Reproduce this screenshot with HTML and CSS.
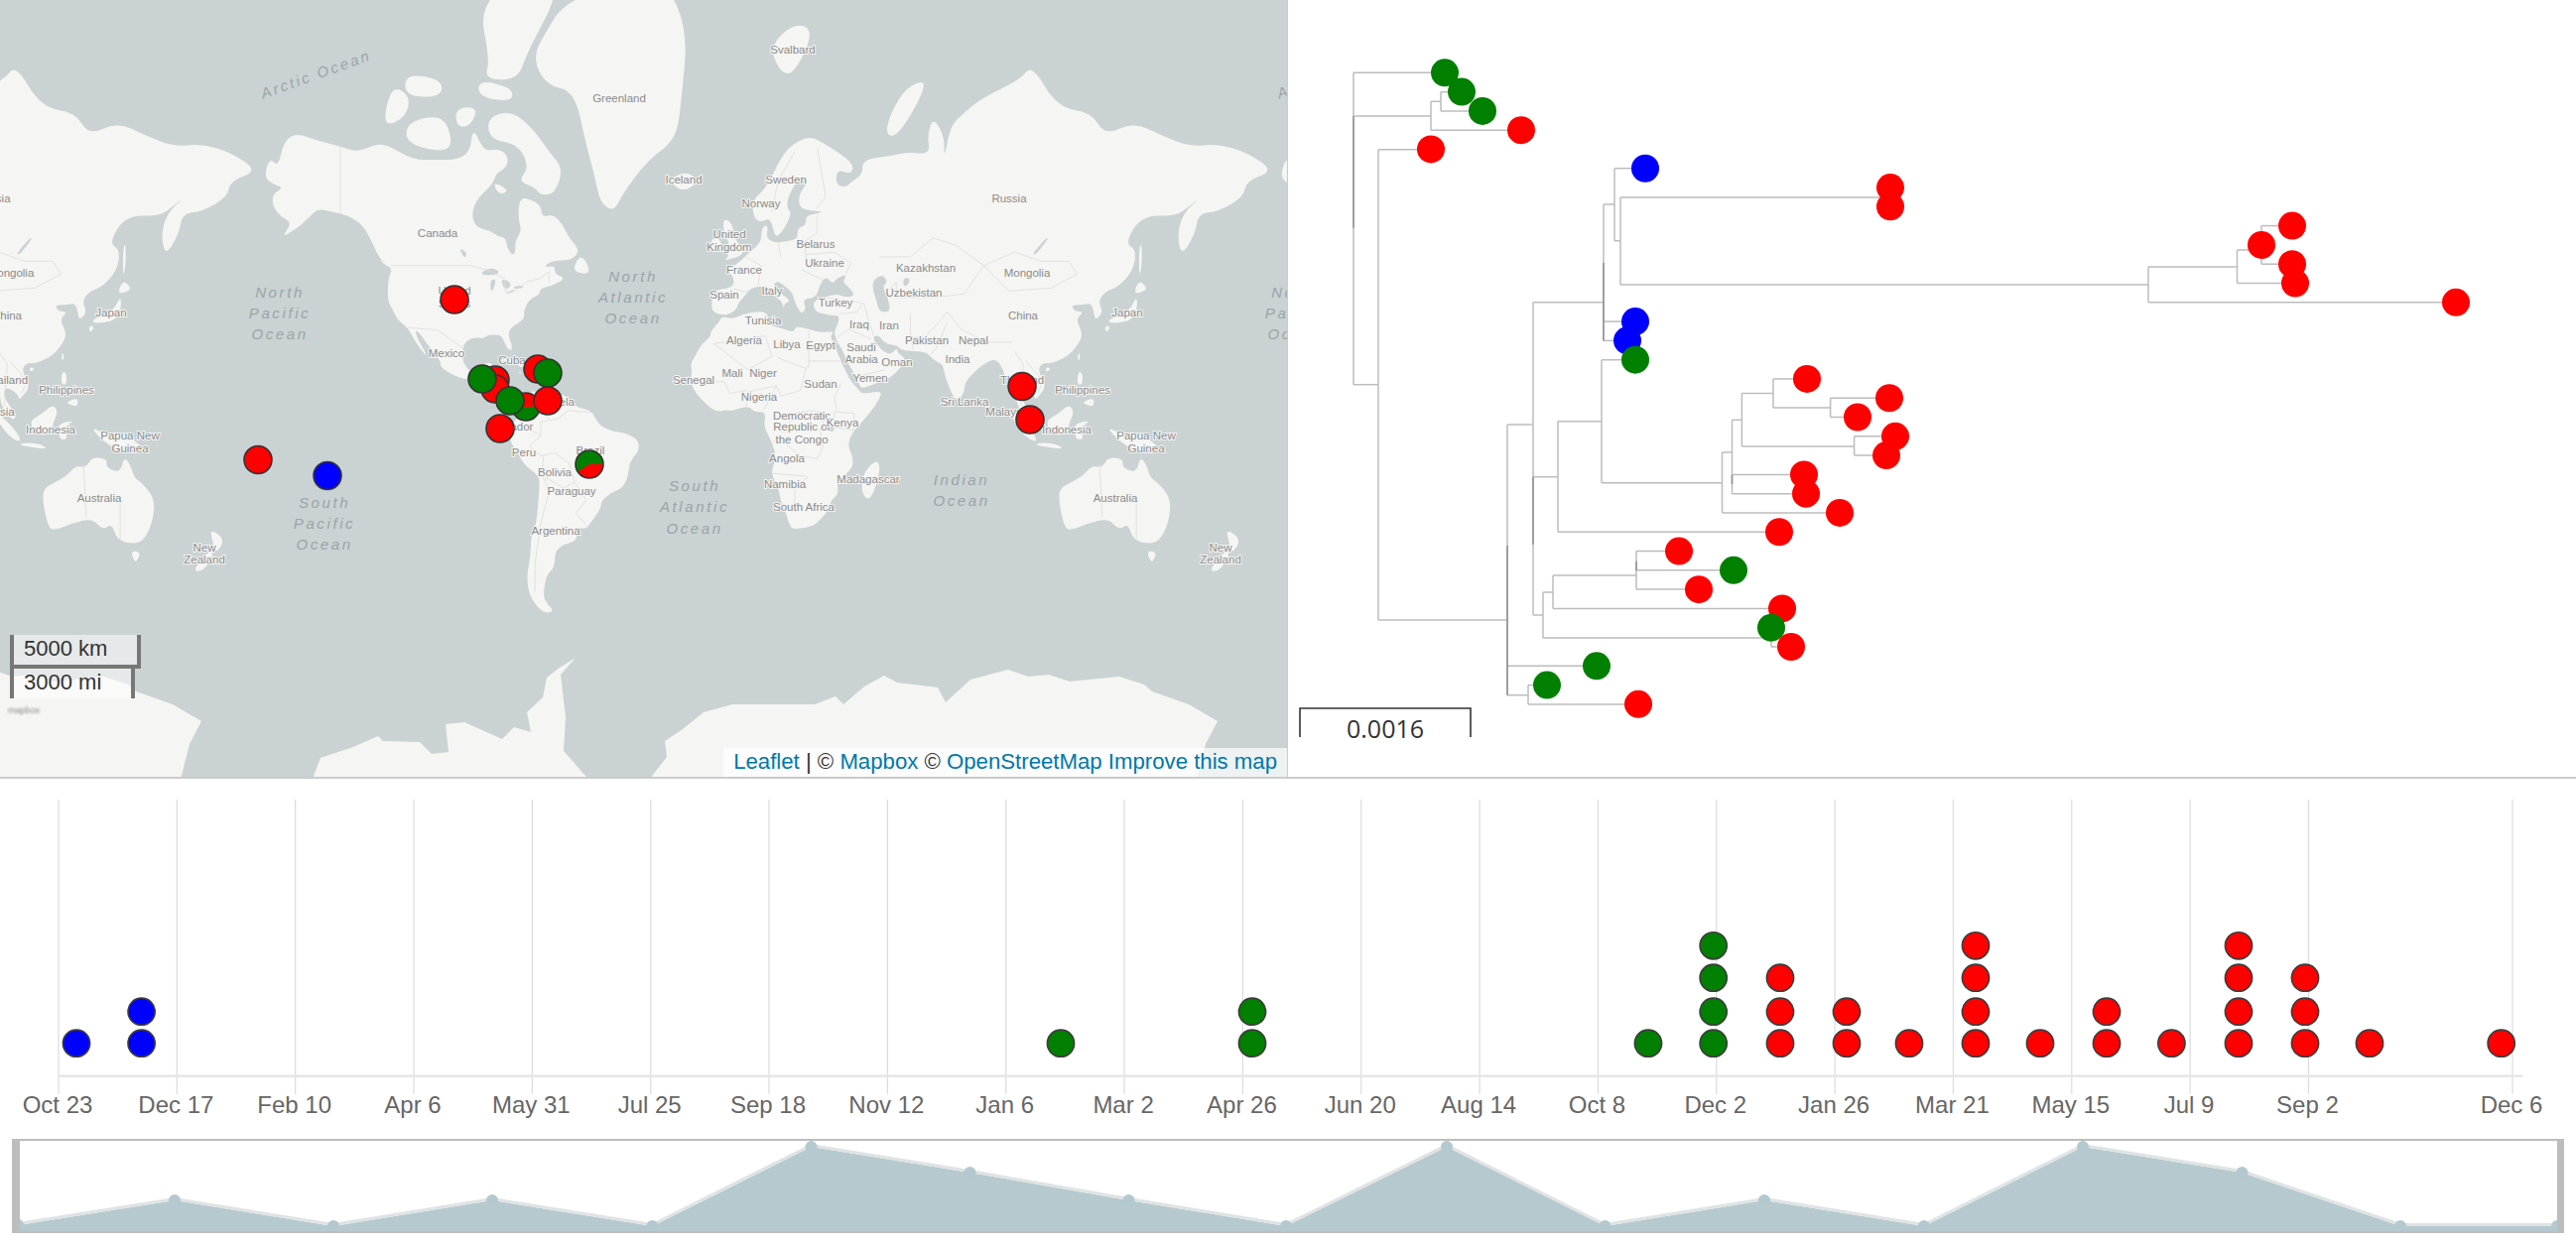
FILE: index.html
```html
<!DOCTYPE html>
<html>
<head>
  <meta charset="utf-8">
  <title>Phylogeography</title>
  <link rel="stylesheet" href="styles.css">
</head>
<body>
  <div class="top-row">
    <section class="map-panel">
      <svg id="map" class="fill-svg" viewBox="0 0 1297 783"></svg>
      <div class="map-scale">
        <div class="scale-line scale-km">5000 km</div>
        <div class="scale-line scale-mi">3000 mi</div>
      </div>
      <div class="map-logo">mapbox</div>
      <div class="attribution">
        <a href="#">Leaflet</a> | © <a href="#">Mapbox</a> © <a href="#">OpenStreetMap</a> <a href="#">Improve this map</a>
      </div>
    </section>
    <section class="tree-panel">
      <svg id="tree" class="fill-svg" viewBox="1298 0 1298 783"></svg>
    </section>
  </div>
  <section class="timeline-panel">
    <svg id="timeline" class="fill-svg" viewBox="0 785 2596 361"></svg>
  </section>
  <section class="brush-panel">
    <svg id="brush" class="fill-svg" viewBox="20 1150 2557 91" preserveAspectRatio="none"></svg>
  </section>
  <script src="app.js"></script>
</body>
</html>
```

FILE: styles.css
```css
* {
  box-sizing: border-box;
}
html, body {
  margin: 0;
  height: 100%;
  overflow: hidden;
  background: #fff;
}
body {
  display: flex;
  flex-direction: column;
  font-family: "Liberation Sans", Arial, sans-serif;
}
.fill-svg {
  display: block;
  width: 100%;
  height: 100%;
  overflow: hidden;
}
.top-row {
  display: flex;
  flex: 0 0 785px;
  border-bottom: 2px solid #ccc;
}
.map-panel {
  position: relative;
  flex: 0 0 1297px;
  background: #cad2d3;
}
.tree-panel {
  flex: 1;
  border-left: 1px solid #ccc;
}
.timeline-panel {
  flex: 0 0 361px;
}
.brush-panel {
  flex: 0 0 95px;
  margin: 2px 12px 0 12px;
  border-style: solid;
  border-color: #bdbdbd;
  border-width: 2px 7px 2px 8px;
}

/* map */
.land {
  fill: #f5f5f3;
}
.water {
  fill: #cad2d3;
}
.border {
  fill: none;
  stroke: #dcdcda;
  stroke-width: 0.8;
}
.place {
  font: 11.5px "Liberation Sans Narrow", "Liberation Sans", sans-serif;
  fill: #8b8b8b;
  text-anchor: middle;
  dominant-baseline: middle;
  paint-order: stroke;
  stroke: #f5f5f3;
  stroke-width: 2px;
}
.sea {
  font: italic 15px "Liberation Sans Narrow", "Liberation Sans", sans-serif;
  letter-spacing: 2.6px;
  fill: #9aa5a7;
  text-anchor: middle;
  dominant-baseline: middle;
}
.marker {
  stroke: #333;
  stroke-width: 1.6;
}
.map-scale {
  position: absolute;
  left: 10px;
  top: 640px;
  display: flex;
  flex-direction: column;
  align-items: flex-start;
  font-size: 22px;
  line-height: 28px;
  color: #333;
}
.scale-line {
  height: 30px;
  padding-left: 10px;
  border: 4px solid #777;
  border-top: 0;
  background: rgba(255, 255, 255, 0.5);
}
.scale-km {
  width: 132px;
  height: 34px;
}
.scale-mi {
  width: 126px;
  border-bottom: 0;
}
.map-logo {
  position: absolute;
  left: 8px;
  top: 711px;
  font-size: 9px;
  color: #888;
  filter: blur(1px);
}
.attribution {
  position: absolute;
  right: 0;
  bottom: 0;
  padding: 0 10px;
  height: 29px;
  font-size: 22.2px;
  line-height: 27px;
  white-space: nowrap;
  color: #333;
  background: rgba(255, 255, 255, 0.7);
}
.attribution a {
  color: #0078a8;
  text-decoration: none;
}

/* tree */
.edge {
  fill: none;
  stroke: #bcbcbc;
  stroke-width: 1.5;
}
.edge-dark {
  stroke: #8f8f8f;
}
.scale-bar {
  fill: none;
  stroke: #333;
  stroke-width: 1.6;
}
.scale-label {
  font: 25px "Open Sans", sans-serif;
  fill: #333;
  text-anchor: middle;
  dominant-baseline: middle;
}

/* timeline */
.grid {
  stroke: #dcdcdc;
  stroke-width: 1.2;
}
.axis {
  stroke: #e6e6e6;
  stroke-width: 2.4;
}
.tick {
  font-size: 24px;
  fill: #666;
  text-anchor: middle;
  dominant-baseline: middle;
}
.dot {
  stroke: #3c3c3c;
  stroke-width: 1.6;
}

/* brush */
.area {
  fill: #b6c9cf;
}
.area-line {
  fill: none;
  stroke: #dfe3e4;
  stroke-width: 3;
}
.area-dot {
  fill: #b4c9cf;
}
```

FILE: app.js
```js
const RED = '#f00', GREEN = '#007f00', BLUE = '#00f';

// web mercator, world is 1024px wide on this zoom
function project(p) {
  const x = 232 + (p[0] + 180) / 360 * 1024;
  const y = 428 - 162.97 * Math.log(Math.tan(Math.PI / 4 + p[1] * Math.PI / 360));
  return [x, y];
}

function toPairs(list) {
  const out = [];
  for (let i = 0; i < list.length; i += 2) out.push([list[i], list[i + 1]]);
  return out;
}

const fmt = (p) => p[0].toFixed(1) + ',' + p[1].toFixed(1);
const mid = (a, b) => [(a[0] + b[0]) / 2, (a[1] + b[1]) / 2];

// coasts are sparse, round the corners through edge midpoints
function smoothPath(pts) {
  const n = pts.length;
  let d = 'M' + fmt(mid(pts[n - 1], pts[0]));
  pts.forEach((p, i) => {
    d += 'Q' + fmt(p) + ' ' + fmt(mid(p, pts[(i + 1) % n]));
  });
  return d + 'Z';
}

const landPath = (list) => smoothPath(toPairs(list).map(project));
const linePath = (list) => 'M' + toPairs(list).map(project).map(fmt).join('L');

const LAND = [
  // north america
  [-168,65.6,-166,68.3,-163,67,-161,70.3,-156.5,71.3,-150,70.5,-141,69.7,-135,69,-128,70,-124,69.8,-115,68,-108,68,-100,68,-95,69,-94,72,-90,69,-85,69.5,-81.5,68.5,-82,67,-86,66,-87,64.5,-93,62,-94.5,59,-92.5,57,-88,56.5,-85,55.3,-82.3,55,-82,53,-80,51.3,-79,52,-79,54.5,-76.7,56.5,-78,58.7,-77.5,62.5,-73,62,-70,61,-69.5,59,-65.5,59.5,-62,57.5,-60,55,-56,52.5,-59,50.2,-66,50.2,-69,48.5,-65,49,-65,47,-61,46,-66,44,-70,43.5,-70.5,41.7,-74,40.5,-76,37.5,-75.7,35.3,-78,33.8,-81,32,-81.5,30,-80,26.8,-80.5,25.2,-81.8,26,-82.8,28,-84,30,-86,30.4,-89,30.2,-90,29.2,-94,29.5,-97.3,27.7,-97.7,24,-97.5,21.5,-95.5,18.7,-92,18.5,-90.7,19.5,-90.3,21,-87,21.5,-87.7,18,-88.7,16,-84,15.8,-83.3,14.5,-83.7,11,-82,9,-79.7,9.5,-77.3,8.7,-77.5,7.5,-78.3,8.3,-80,7.3,-82.8,8.2,-85.7,10,-87.5,13,-91.5,14,-94.5,16.2,-97,15.8,-101.5,17.5,-105.5,20,-105.5,22,-108,25,-110,27.2,-113,31,-114.7,31.7,-113,28,-110,23.5,-112,25,-115,29,-117,32.5,-120.5,34.5,-122.5,37.7,-124.3,40.3,-124,46,-122.5,48,-125,49.5,-127.5,51,-130,54.5,-133,57.5,-138,59.3,-144,60,-149,60.5,-152,59,-156,57,-162,55,-158,58,-162,59,-165,61,-165,63,-161,64,-165,64.5],
  // canadian arctic
  [-80,73.7,-72,71.5,-67,69,-62,66.8,-65,63,-70,62.8,-72,64,-78,65,-74,67,-78,70,-88,70.5,-89,73],
  [-117,70,-105,69,-101,70,-104,73,-112,73,-118,72],
  [-125,72,-118,73,-116,75,-122,76,-125,74],
  [-90,76.5,-78,76.5,-75,78.5,-62,82.5,-75,83,-92,81.5,-88,78],
  [-92,75,-80,74.5,-80,75.8,-92,76.5],
  [-118,75,-105,75,-105,76.5,-118,77],
  [-100,72,-95,72,-92,74,-100,74],
  [-87,65,-81,63.5,-85,62.8],
  [-59,47.7,-53,46.8,-53,49,-56,51.5],
  [-128,50.8,-124,48.5,-123.5,49],
  // greenland
  [-73,78.2,-68,76,-58,75.5,-54,70,-51,66,-49,61.5,-44,60,-41,63,-32,68,-22,70.5,-20,75,-18,80,-25,82.5,-45,82.5,-62,81.5,-68,80],
  // caribbean
  [-85,22,-82,23,-77,21,-74.3,20,-77.5,20,-78,21],
  [-74.4,19.5,-71,20,-68.5,18.5,-71.5,18,-74.4,18.3],
  [-67,18.5,-65.7,18.3,-67,18],
  [-78.3,18.4,-76.3,18.1,-77.5,17.8],
  // south america
  [-77.3,8.7,-75.5,10.7,-72,12,-71.5,11,-68,10.7,-64,10.5,-61.5,10.5,-60,8.5,-57,6,-52,5,-50,1,-48,-1,-44,-2.5,-40,-3,-35.5,-5.2,-35,-9,-38.5,-13,-39,-18,-41,-22,-44.5,-23.2,-48.5,-26,-48.7,-28.5,-52,-32.5,-54,-34.8,-58.3,-34,-57,-36.5,-58,-38.3,-62,-39,-65,-41,-65,-45,-68,-47,-69,-51,-68.5,-53,-65,-55,-69,-55.5,-74,-52,-75,-47,-73.5,-42,-73.5,-37,-71.5,-33,-71,-28,-70.3,-20,-71,-17.5,-76,-14,-78,-10,-81,-6,-80,-3,-81,-1,-79.5,1,-78,2.5,-77.3,4,-77.5,7],
  // africa
  [-5.9,35.8,-2,35,3,36.8,10,37.3,11,34,10,33.5,15,32.3,20,31,20,32.7,23,32.5,29,31,32,31.2,34,31.2,32.5,30,34,27,36,23,37.2,20,38.5,18,40,15,43,12,44,10.8,51,12,50,9,47,4.5,42,-1,39.5,-4.5,39,-8,40.5,-11,40.7,-15,36.5,-18.5,35,-20,35.5,-24,32.7,-26,32.5,-28.5,28,-33,25.5,-34,20,-34.8,18.3,-34,17,-30,15,-26.5,14.5,-22.5,12,-18,12,-15,13.5,-12,12,-6,9,-1,9.7,3.5,8.5,4.6,6,4.3,4,6.3,1,6,-2,4.8,-4.5,5.2,-7.5,4.4,-11,6.8,-13,9,-15,11,-17,14.7,-16.3,19,-17,21,-15,24,-13,27.5,-10,29.5,-9.7,31.5,-6.8,34],
  [49.3,-12,50.4,-16,47.5,-25,45,-25.5,43.5,-22,44.5,-16.5],
  // eurasia
  [-5.5,36,-9,37,-9.5,39,-9,43,-2,43.5,-1.3,46,-4.7,48.4,-1.5,48.8,1.5,50.5,4,52,8,54,8.3,57,10.5,57.7,10,55,12,54.3,14,54,19,54.5,21,55,21,57,24,57.5,24,59.3,28,59.7,30,60,25,60.2,21.5,60.8,21.5,63,25,65,22,65.8,17.5,62.5,17.3,60.5,19,59.8,16.5,57,14.3,55.5,13,55.4,11.3,59,8,58,5.3,59,5,62,10,64,14,67.5,18,69.7,25,71,31,70,41,67.5,40,66,35,66.7,34.5,64.5,38,64,40.5,65,44,66,44,68,54,68.5,60,69,68,68.7,67,71,69,73,73,71,73,68,75,72,80,73.5,87,75,100,76.5,104,77.7,113,74,125,73.5,130,71,140,72.5,150,71,160,69.7,170,70,180,69,190,66.5,180,65,179,62.5,170,60,163,59.7,162,56,157,51,155.5,56,158,60,164,62.5,160,61,155,59.2,143,59.3,137,54,141,52.5,140,48,135,44,130,42.5,127.5,40,129.3,37,126.5,34.5,126,37,125,39.5,121.5,39,118,39,119,37.3,122.5,37,119.5,35,122,31,121,28,117,23.5,110.5,21,108,21.5,106,19,109,13.5,107,10.5,105,8.7,105,10.5,100.5,13.5,99.5,10,103.5,4.5,104,1.4,101,3,98.5,8,98.5,12,97.5,16.5,94.5,16,94,19,91.5,22.5,89,22,87,21,85,19.5,80.3,15,80,11,77.5,8,75,12,73,18,72.5,21,69,22.3,67,24.8,62,25.2,57.5,25.5,56.5,27,52,27.5,50,30,48,30,48,28.5,50,26.5,51.5,25,54,24,56.3,26.3,56.5,24.5,59.8,22.5,55,17,52,15.7,45,13,43.3,12.8,42.7,15,39,21,36.7,26,35,28,34.5,29.5,34,31.2,35,33,36,36,33,36,30.5,36.5,27.5,37,26.3,39.5,29,41,31,41.2,35,42,38,41,41.5,41.5,39,43.8,37,45,38.5,47,35,46,33.5,44.5,31,46.5,28.7,44,28,41.7,26,40.8,23,40.5,24,38,22.5,36.5,21,38,19.5,41,19,42.5,14.5,45.2,12.5,44.8,13,43,16,41.7,18.5,40,16.5,39.5,16,38,15.5,40,12.5,41.5,10,43.8,8,44,4,43.3,3,42,0,39.5,-0.5,38,-2,36.8],
  // islands
  [-5.5,50,1.3,51.2,1.7,52.7,-1.5,55,-2,57.5,-3.5,58.5,-5.5,58.5,-5,55.5,-3,54,-4.8,52,-3,51.3],
  [-10,52,-6.2,52.2,-6,54.5,-8.5,55.2,-10,54],
  [-24,65.5,-18,66.4,-14,65,-18.5,63.5,-22.5,64],
  [11,79,20,80.5,27,80,20,77,15,77],
  [52,71,57,71,68,76.5,60,76,54,73.5],
  [130.9,34,135,33.8,140,35,141.5,39,141,41.3,139.5,38.5,136,36,132,35.2],
  [140,42,143.5,42.5,145,43.5,142,45.5],
  [130,33,131.7,33,131,31.2,130,31.5],
  [142,46,143,49,143,54,142,53],
  [121,25,121,22,120,23],
  [109,20,111,19.5,109,18.2],
  [80,9.5,82,7.5,80.5,6,79.8,8],
  [120.5,18.5,122,18,122,14,120,14],
  [122,8,126,9.5,126,6.3,123,7],
  [109,1.5,113,3.5,117,7,119,5,117.5,1,116,-4,110.5,-3],
  [95.3,5.5,98,4,104,-2,106,-5.8,104,-5.7,100,-2.5],
  [105.5,-6.5,111,-6.5,114.5,-7.7,114.5,-8.7,106,-7.5],
  [119.5,0.5,125,1.5,121,-1,122.5,-5,120,-5.5,119,-2.5],
  [131,-1,135,-3,141,-2.7,147,-6,150.5,-10.5,146,-8.5,142,-9,138,-8,133,-4],
  [114,-22,113.5,-26,115.5,-34.3,118,-35,124,-33,131,-31.5,135,-35,138,-33,140,-38,146,-39,150,-37.5,153,-31,153,-25,149,-20.5,146,-18.5,145,-15,142.5,-11,141,-17,136,-15,136.5,-12,131,-11.5,129,-15,125,-14.5,122,-18,117,-20.5],
  [144.7,-40.8,148.3,-41,147,-43.5,146,-43.5],
  [172.7,-34.5,178.3,-37.7,175,-41.5,174,-39],
  [172.7,-40.5,174.3,-41.7,170.5,-46,166.5,-46]
];

const LAKES = [
  [-92,46.8,-85,46.7,-85,48,-88.5,48.5],
  [-87.5,41.8,-85.5,45.8,-88,45.5],
  [-84,46,-80,44.7,-82,43,-83.5,44],
  [-83,41.7,-79,42.7,-80,43],
  [-79.7,43.3,-76,43.5,-76.5,44.2,-79.5,43.8],
  [-99,53,-97,50.5,-96,52],
  [47,45,51,47,53,45,51,44,53,41,54,37,50,37,49,40],
  [58.5,46,61,46,60,44,58.5,44],
  [104,51.5,109,55,110,55,105.5,51.5],
  [32,0,34,0,34,-2.5,32,-2.5]
];

const BORDERS = [
  [-123,49,-95,49,-89,48,-83,46,-82.5,42.5,-79,43,-75,45,-70,46,-67,47.5,-67,45],
  [-141,69.7,-141,60],
  [-117,32.5,-106.5,31.7,-97.3,26],
  [-51.5,4.3,-60,5,-64,2,-70,1,-70,-4,-74,-7.5,-70,-11,-65,-10,-60,-13.5,-58,-20,-55,-24,-54,-26,-57.5,-30,-53.5,-33.7],
  [-69.5,-17.5,-67,-23,-70,-33,-72,-44,-72,-51],
  [-69,-11,-69.5,-17.5,-62,-22,-58,-20],
  [-78,0,-75,-1,-70,-4],
  [-72,12,-72,7,-67,2],
  [-8.7,27.5,-4.8,25,3.3,19,12,23.5,9.5,30,-8.7,27.5],
  [25,31.5,25,20,24,19.5,14,23],
  [25,22,36.8,22],
  [24,19.5,22,12,15,10,13.5,13.7],
  [12.3,-6,16,-6,22,-11,28,-12,30,-8,29,-2,31,3,27,5,19,4,18,0,16,-3],
  [2.7,6.3,3.5,11.5,13.5,13.7,9,5],
  [12,-17,24,-18],
  [17,-29,20,-28,20,-22,25,-18],
  [34,4.5,41,4,41,-2,34,-1,34,4.5],
  [36.5,14.5,34,10,35,5],
  [-12,15,-5,15,-3,11,3,12],
  [-1.7,43.3,3,42.4],
  [2.5,51,8,49,7,44],
  [14.2,54,15,51],
  [23.5,54.3,24,50.5],
  [22.5,48,30,45.5],
  [24,51.5,34,52,40,49.5,38,47],
  [28,59.5,28,56,23.5,54.3],
  [28,69.5,31,62.5,27.5,60.5],
  [12,60,14,65,20,69],
  [26.5,41.5,44,39.5,42,37,36,36.5],
  [44.5,39.5,46,35,48,30],
  [61,36.5,61,31,62,25.5],
  [35,29.5,39,32,47,29],
  [43,17,52,19],
  [50,51,61,51,69,55,77,53.5,87,49,80,42,70,41,56,41,56,45,52,42],
  [87,49,98,52,107,50,117,50,120,47,111,43.5,96,42.7,87,49],
  [74,37,79,32,88,28,97,28],
  [74,34,70,26,68,24],
  [61,29.5,66,29.5,71,34,74,37],
  [98,25,101,21,100,6.5],
  [102,22,108,15,106,11],
  [128,-14,129,-31],
  [141,-26,141,-38]
];

// antarctic coast was easier to read straight off the map, in px
const ANTARCTIC = [
  [[313,790],[323,764],[356,753],[381,742],[386,747],[423,748],[435,760],[452,758],[449,730],[468,728],[506,745],[518,733],[535,738],[531,718],[547,703],[551,683],[564,673],[580,663],[565,680],[570,723],[568,757],[597,790]],
  [[651,790],[672,763],[670,747],[688,735],[709,718],[738,710],[788,710],[821,710],[842,702],[850,710],[871,692],[891,681],[904,688],[945,693],[953,708],[978,685],[1016,675],[1036,682],[1057,680],[1078,687],[1128,682],[1153,690],[1161,697],[1198,710],[1227,727],[1215,750],[1205,790]]
];

const PLACES = [
  ['Svalbard',799,51],['Greenland',624,100],['Iceland',689,182],['Sweden',792,182],['Norway',767,206],
  ['United',735,237],['Kingdom',735,250],['Belarus',822,247],['Ukraine',831,266],['France',750,273],
  ['Spain',730,298],['Italy',778,294],['Turkey',842,306],['Tunisia',769,324],['Algeria',750,344],
  ['Libya',793,348],['Egypt',827,349],['Iraq',866,328],['Iran',896,329],['Saudi',868,351],['Arabia',868,363],
  ['Oman',904,366],['Yemen',877,382],['Sudan',827,388],['Mali',738,377],['Niger',769,377],['Nigeria',765,401],
  ['Senegal',699,384],['Democratic',808,420],['Republic of',808,431],['the Congo',808,444],['Kenya',849,427],
  ['Angola',793,463],['Namibia',791,489],['Madagascar',875,484],['South Africa',810,512],['Russia',1017,201],
  ['Kazakhstan',933,271],['Uzbekistan',921,296],['Mongolia',1035,276],['China',1031,319],['Japan',1136,316],
  ['Pakistan',934,344],['Nepal',981,344],['India',965,363],['Sri Lanka',972,406],['Thailand',1030,384],
  ['Philippines',1091,394],['Malaysia',1016,416],['Indonesia',1075,434],['Papua New',1155,440],['Guinea',1155,453],
  ['Australia',1124,503],['New',1230,553],['Zealand',1230,565],['Canada',441,236],['United',458,294],['States',458,307],
  ['Mexico',450,357],['Cuba',516,364],['Venezuela',552,406],['Ecuador',516,431],['Peru',528,457],['Brazil',595,455],
  ['Bolivia',559,477],['Paraguay',576,496],['Argentina',560,536]
];

const SEAS = [
  ['North',282,296],['Pacific',282,317],['Ocean',282,338],
  ['North',638,280],['Atlantic',638,301],['Ocean',638,322],
  ['South',700,491],['Atlantic',700,512],['Ocean',700,534],
  ['Indian',969,485],['Ocean',969,506],
  ['South',327,508],['Pacific',327,529],['Ocean',327,550]
];

function drawMap() {
  let world = '';
  world += LAND.map((l) => `<path class="land" d="${landPath(l)}"/>`).join('');
  world += ANTARCTIC.map((a) => `<path class="land" d="M${a.join('L')}Z"/>`).join('');
  world += LAKES.map((l) => `<path class="water" d="${landPath(l)}"/>`).join('');
  world += BORDERS.map((b) => `<path class="border" d="${linePath(b)}"/>`).join('');
  world += PLACES.map((p) => `<text class="place" x="${p[1]}" y="${p[2]}">${p[0]}</text>`).join('');
  world += SEAS.map((p) => `<text class="sea" x="${p[1]}" y="${p[2]}">${p[0]}</text>`).join('');
  world += `<text class="sea" transform="translate(319 76) rotate(-20)">Arctic Ocean</text>`;

  const full = (x, y, c) => `<circle class="marker" cx="${x}" cy="${y}" r="14" fill="${c}"/>`;
  const pie = (x, y, redFrom, redTo) => {
    const r = 14, rad = (a) => a * Math.PI / 180;
    const p = (a) => `${x + r * Math.cos(rad(a))},${y + r * Math.sin(rad(a))}`;
    const big = (redTo - redFrom) > 180 ? 1 : 0;
    return `<circle cx="${x}" cy="${y}" r="${r}" fill="${GREEN}"/>` +
      `<path d="M${x},${y}L${p(redFrom)}A${r},${r} 0 ${big} 1 ${p(redTo)}Z" fill="${RED}"/>` +
      `<circle class="marker" cx="${x}" cy="${y}" r="${r}" fill="none"/>`;
  };
  const markers = [
    full(458, 302, RED), full(260, 463.5, RED), full(330, 479.5, BLUE), full(1030, 389.5, RED), full(1038, 423, RED),
    full(499, 383, RED), full(499, 392, RED), full(486, 382, GREEN),
    pie(530, 410, 180, 360), full(514, 404, GREEN), full(552, 404, RED),
    full(542, 372, RED), full(552, 376, GREEN), full(504, 432, RED),
    pie(594, 468, 0, 147)
  ].join('');

  document.getElementById('map').innerHTML =
    `<defs><g id="world">${world}</g></defs>` +
    `<use href="#world" x="-1024"/><use href="#world"/><use href="#world" x="1024"/>` + markers;
}

// tips, top to bottom, evenly spaced
const rowY = (i) => 73.3 + 19.29 * i;
const TIPS = [
  [1456, GREEN], [1473, GREEN], [1494, GREEN], [1533, RED], [1442, RED], [1658, BLUE], [1905, RED], [1905, RED],
  [2310, RED], [2279, RED], [2310, RED], [2313, RED], [2475, RED], [1648, BLUE], [1640, BLUE], [1648, GREEN],
  [1821, RED], [1904, RED], [1872, RED], [1910, RED], [1901, RED], [1818, RED], [1820, RED], [1854, RED],
  [1793, RED], [1692, RED], [1747, GREEN], [1712, RED], [1796, RED], [1785, GREEN], [1805, RED], [1609, GREEN],
  [1559, GREEN], [1651, RED]
];

// h: y, x1, x2   v: x, y1, y2
const H = [
  [73.3,1364,1456],[117,1364,1442],[102.3,1442,1452],[92.7,1452,1473],[112,1452,1494],[131.3,1442,1533],
  [387.7,1364,1389],[150.7,1389,1442],[625,1389,1519],[428,1519,1545],[304.7,1545,1616],[206,1616,1627],
  [169.7,1627,1658],[242.7,1627,1633],[199,1633,1905],[287,1633,2165],[269,2165,2254.5],[252,2254.5,2279],
  [227.6,2279,2310],[266.2,2279,2310],[285.5,2254.5,2313],[304.8,2165,2475],[324.1,1616,1648],[343.4,1616,1640],
  [480.7,1545,1570],[424.7,1570,1614],[362.7,1614,1648],[486.7,1614,1735.5],[456,1735.5,1745.5],[517,1735.5,1854],
  [423.3,1745.5,1755.4],[478.4,1745.5,1818],[497.7,1745.5,1820],[396.5,1755.4,1787],[382,1787,1821],[411,1787,1844.6],
  [401.2,1844.6,1904],[420.5,1844.6,1872],[450,1755.4,1868.6],[439.8,1868.6,1910],[459,1868.6,1901],[536.3,1570,1793],
  [620,1545,1555],[597,1555,1565],[580,1565,1649],[555.5,1649,1692],[574.8,1649,1747],[594,1649,1712],
  [613.4,1565,1796],[643,1555,1785],[652,1785,1805],[671.3,1519,1609],[700.7,1519,1540],[690.6,1540,1559],[709.9,1540,1651]
];
const V = [
  [1364,73.3,387.7],[1442,102.3,131.3],[1452,92.7,112],[1389,150.7,625],[1519,428,700.7],[1545,304.7,620],
  [1616,206,343.4],[1627,169.7,242.7],[1633,199,287],[2165,269,304.8],[2254.5,252,285.5],[2279,227.6,266.2],
  [1570,424.7,536.3],[1614,362.7,486.7],[1735.5,456,517],[1745.5,423.3,497.7],[1755.4,396.5,450],[1787,382,411],
  [1844.6,401.2,420.5],[1868.6,439.8,459],[1555,597,643],[1565,580,613.4],[1649,555.5,594],[1785,632.7,652],[1540,690.6,709.9]
];
// where two segments overlap the line renders darker
const V_DARK = [[1364,117,230],[1616,265,343.4],[1545,480.7,549],[1519,550,700.7],[1649,565.7,575],[1745.5,478.7,488]];

function drawTree() {
  const line = (x1, y1, x2, y2, cls) => `<line class="${cls}" x1="${x1}" y1="${y1}" x2="${x2}" y2="${y2}"/>`;
  let s = '';
  H.forEach((h) => { s += line(h[1], h[0], h[2], h[0], 'edge'); });
  V.forEach((v) => { s += line(v[0], v[1], v[0], v[2], 'edge'); });
  V_DARK.forEach((v) => { s += line(v[0], v[1], v[0], v[2], 'edge edge-dark'); });

  // the green at row 29 sits over both of its neighbours
  const order = TIPS.map((t, i) => i).filter((i) => i !== 29);
  order.push(29);
  order.forEach((i) => {
    s += `<circle cx="${TIPS[i][0]}" cy="${rowY(i)}" r="14" fill="${TIPS[i][1]}"/>`;
  });

  s += '<path class="scale-bar" d="M1310,743V714H1482V743"/>';
  s += '<text class="scale-label" x="1396" y="737">0.0016</text>';
  document.getElementById('tree').innerHTML = s;
}

const TICK_NAMES = ['Oct 23','Dec 17','Feb 10','Apr 6','May 31','Jul 25','Sep 18','Nov 12','Jan 6','Mar 2','Apr 26',
  'Jun 20','Aug 14','Oct 8','Dec 2','Jan 26','Mar 21','May 15','Jul 9','Sep 2'];
const TICKS = TICK_NAMES.map((name, i) => [name, 59 + 119.34 * i]);
TICKS.push(['Dec 6', 2532]);

const STACKS = [
  [77,1,BLUE],[142.6,2,BLUE],[1069,1,GREEN],[1262,2,GREEN],[1661,1,GREEN],[1726.7,4,GREEN],[1794,3,RED],[1861,2,RED],
  [1924,1,RED],[1991,4,RED],[2056,1,RED],[2123,2,RED],[2188.4,1,RED],[2256,4,RED],[2323,3,RED],[2388,1,RED],[2520.7,1,RED]
];
const STACK_Y = [1051.7, 1019.7, 985.7, 953.3];

function drawTimeline() {
  let s = '';
  TICKS.forEach((t) => {
    s += `<line class="grid" x1="${t[1]}" y1="806" x2="${t[1]}" y2="1103"/>`;
  });
  s += '<line class="axis" x1="59" y1="1084.7" x2="2542" y2="1084.7"/>';
  TICKS.forEach((t) => {
    s += `<text class="tick" x="${t[1] - 1}" y="1116">${t[0]}</text>`;
  });
  STACKS.forEach((c) => {
    for (let i = 0; i < c[1]; i++) {
      s += `<circle class="dot" cx="${c[0]}" cy="${STACK_Y[i]}" r="13.6" fill="${c[2]}"/>`;
    }
  });
  document.getElementById('timeline').innerHTML = s;
}

const AREA = [
  [18,1235],[176,1210],[336,1236],[496,1210],[657.5,1236],[817.5,1156],[977.5,1182],[1137.5,1210],[1296,1236],
  [1458,1156],[1617.5,1236],[1778,1210],[1939,1236],[2099,1156],[2259.5,1182],[2419,1236],[2577,1236]
];

function drawBrush() {
  const pts = AREA.map((p) => p.join(',')).join(' ');
  let s = `<polygon class="area" points="18,1241 ${pts} 2577,1241"/>`;
  s += `<polyline class="area-line" points="${pts}" transform="translate(0 -1.5)"/>`;
  AREA.forEach((p) => {
    s += `<circle class="area-dot" cx="${p[0]}" cy="${p[1]}" r="6"/>`;
  });
  document.getElementById('brush').innerHTML = s;
}

drawMap();
drawTree();
drawTimeline();
drawBrush();
```
